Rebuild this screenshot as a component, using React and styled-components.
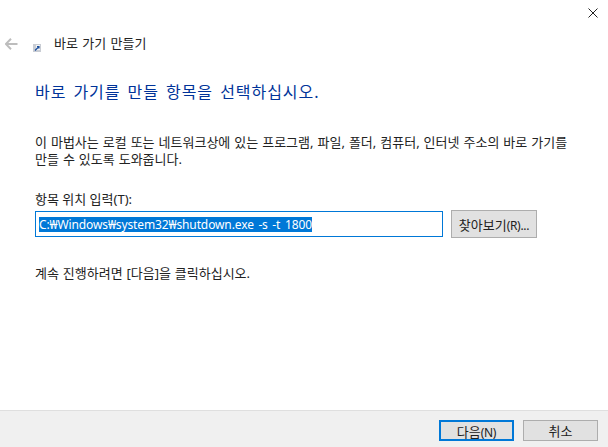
import React from "react";
import styled, { createGlobalStyle } from "styled-components";

const Global = createGlobalStyle`
  html, body { margin: 0; padding: 0; background: #fff; }
  #root { width: 608px; height: 447px; }
`;
const FONT = `"Noto Sans", "Noto Sans CJK KR", sans-serif`;

const Dialog = styled.div`
  width: 608px; height: 447px; display: flex; flex-direction: column;
  background: #fff; font-family: ${FONT}; font-size: 13px; color: #1a1a1a; overflow: hidden;
`;
const CloseRow = styled.div`
  height: 30px; display: flex; justify-content: flex-end; padding: 8px 10px 0 0; box-sizing: border-box;
`;
const NavRow = styled.div`
  height: 26px; display: flex; align-items: flex-start; padding-left: 5px;
`;
const BackIcon = styled.svg`width: 13px; height: 12px; margin-top: 8px; display: block;`;
const AppIcon = styled.svg`width: 8px; height: 8px; margin: 14px 0 0 15px; display: block;`;
const WindowTitle = styled.div`margin-left: 13px; line-height: 18px; height: 18px; margin-top: 4px; color: #222; word-spacing: 1px;`;
const Content = styled.main`
  flex: 1; display: flex; flex-direction: column; padding: 0 35px;
`;
const Heading = styled.h1`
  margin: 25px 0 0; font-size: 16px; font-weight: 400; line-height: 22px; color: #003399;
  letter-spacing: 0.95px; word-spacing: 2px;
`;
const Description = styled.p`
  margin: 31px 0 0; width: 535px; line-height: 17px; color: #222; word-spacing: 0.6px;
`;
const FieldLabel = styled.label`
  display: block; margin-top: 22px; line-height: 18px; color: #222;
`;
const FieldRow = styled.div`
  display: flex; align-items: center; gap: 8px; margin-top: 2px;
`;
const PathBox = styled.div`
  width: 408px; height: 26px; box-sizing: border-box; border: 1px solid #0078d7;
  padding-left: 3px; display: flex; align-items: center;
`;
const Selected = styled.span`
  background: #0078d7; color: #fff; line-height: 15px; height: 15px; white-space: nowrap; font-size: 12px;
  letter-spacing: -0.12px; word-spacing: 1.6px;
`;
const Button = styled.button`
  box-sizing: border-box; width: ${p => p.$w}px; height: ${p => p.$h}px; padding: 0;
  background: #e1e1e1; border: ${p => p.$primary ? "2px solid #0078d7" : "1.5px solid #adadad"};
  font-family: ${FONT}; font-size: 13px; color: #222; white-space: nowrap;
`;
const Mnemonic = styled.span`
  font-size: 12px; letter-spacing: -0.3px;
`;
const Hint = styled.p`
  margin: 26px 0 0; line-height: 18px; color: #222; word-spacing: 0.5px;
`;
const Footer = styled.footer`
  height: 27px; background: #f0f0f0; border-top: 1px solid #dfdfdf;
  display: flex; justify-content: flex-end; gap: 9px; padding: 9px 10px 0 0;
`;

export default function App() {
  return (
    <Dialog>
      <Global />
      <CloseRow>
        <svg width="10" height="10" viewBox="0 0 10 10">
          <path d="M0.5 0.5 L9.5 9.5 M9.5 0.5 L0.5 9.5" stroke="#222" strokeWidth="1" fill="none" />
        </svg>
      </CloseRow>
      <NavRow>
        <BackIcon viewBox="0 0 13 12">
          <path d="M0.8 6 H12.5 M6 0.8 L0.8 6 L6 11.2" stroke="#bdbdbd" strokeWidth="2" fill="none" />
        </BackIcon>
        <AppIcon viewBox="0 0 8 8">
          <rect x="0" y="0" width="8" height="8" fill="#c9cdd4" />
          <rect x="3" y="1" width="4" height="5" fill="#f4f4f4" />
          <path d="M2 6.5 L5.5 3 M4 2.5 H6 V4.5" stroke="#1c4f9c" strokeWidth="1.2" fill="none" />
        </AppIcon>
        <WindowTitle>바로 가기 만들기</WindowTitle>
      </NavRow>
      <Content>
        <Heading>바로 가기를 만들 항목을 선택하십시오.</Heading>
        <Description>
          이 마법사는 로컬 또는 네트워크상에 있는 프로그램, 파일, 폴더, 컴퓨터, 인터넷 주소의 바로 가기를 만들 수 있도록 도와줍니다.
        </Description>
        <FieldLabel>항목 위치 입력(T):</FieldLabel>
        <FieldRow>
          <PathBox>
            <Selected>C:₩Windows₩system32₩shutdown.exe -s -t 1800</Selected>
          </PathBox>
          <Button $w={86} $h={28}>찾아보기<Mnemonic>(R)...</Mnemonic></Button>
        </FieldRow>
        <Hint>계속 진행하려면 [다음]을 클릭하십시오.</Hint>
      </Content>
      <Footer>
        <Button $w={75} $h={21} $primary>다음<Mnemonic>(N)</Mnemonic></Button>
        <Button $w={75} $h={21}>취소</Button>
      </Footer>
    </Dialog>
  );
}
